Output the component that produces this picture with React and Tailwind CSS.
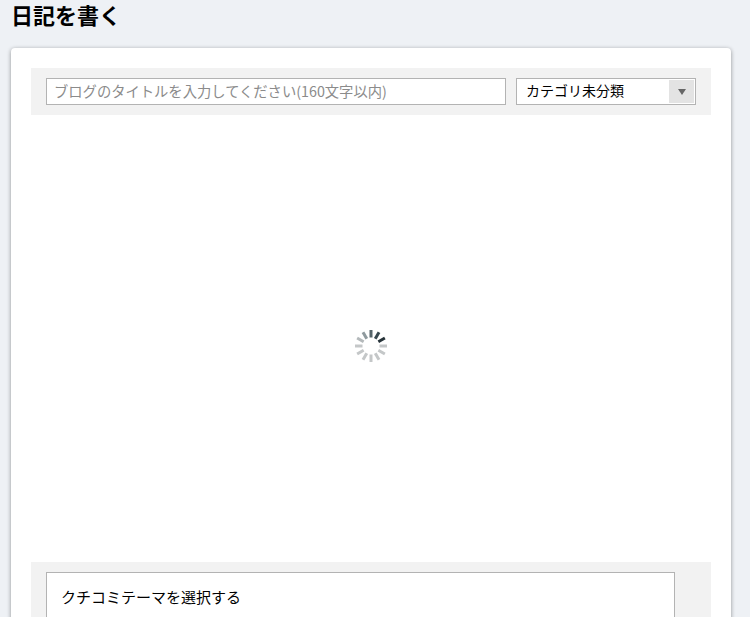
import React from 'react';

// 12 bars, clockwise from the top
const spinnerBars = [
  { angle: 0, color: '#56656b' },
  { angle: 30, color: '#37474f' },
  { angle: 60, color: '#263238' },
  { angle: 90, color: '#c4c7c8' },
  { angle: 120, color: '#c4c7c8' },
  { angle: 150, color: '#c4c7c8' },
  { angle: 180, color: '#c4c7c8' },
  { angle: 210, color: '#c4c7c8' },
  { angle: 240, color: '#c4c7c8' },
  { angle: 270, color: '#c4c7c8' },
  { angle: 300, color: '#b4b9bb' },
  { angle: 330, color: '#8f9a9e' },
];

const Spinner = () => (
  <svg width="34" height="34" viewBox="0 0 34 34" aria-label="loading">
    {spinnerBars.map((bar) => (
      <line
        key={bar.angle}
        x1="17"
        y1="1"
        x2="17"
        y2="8.5"
        stroke={bar.color}
        strokeWidth="3"
        transform={`rotate(${bar.angle} 17 17)`}
      />
    ))}
  </svg>
);

const App = () => {
  return (
    <div className="h-screen overflow-hidden bg-[#eef1f5] pl-[11px] pr-[19px] font-['Noto_Sans_CJK_JP','Liberation_Sans',sans-serif] text-black">
      <h1 className="h-[48px] pt-[3px] font-['Liberation_Sans','Noto_Sans_CJK_JP',sans-serif] text-[22px] leading-[28px] font-bold">日記を書く</h1>

      <div className="rounded-[4px] bg-white p-[20px] shadow-[0_1px_4px_rgba(0,0,0,0.4)]">
        {/* Title and category */}
        <div className="flex h-[47px] items-center gap-[10px] bg-[#f2f2f2] px-[15px]">
          <input
            type="text"
            placeholder="ブログのタイトルを入力してください(160文字以内)"
            className="h-[27px] w-[460px] border border-[#b3b3b3] bg-white px-[7px] pb-[2px] text-[14.3px] outline-none placeholder:text-[#8b8b8b]"
          />
          <div className="flex h-[27px] w-[180px] items-center justify-between border border-[#b3b3b3] bg-white pl-[9px] pr-[1px] text-[14px]">
            <span className="-mt-[2px]">カテゴリ未分類</span>
            <span className="flex h-[23px] w-[25px] items-center justify-center bg-[#e3e3e3]">
              <span className="h-0 w-0 border-x-[4px] border-t-[6px] border-x-transparent border-t-[#666666]" />
            </span>
          </div>
        </div>

        {/* Editor, still loading */}
        <div className="flex h-[447px] items-center justify-center pt-[14px]">
          <Spinner />
        </div>

        {/* Theme picker */}
        <div className="bg-[#f2f2f2] py-[10px] pl-[15px] pr-[36px]">
          <div className="flex h-[50px] items-center border border-[#b3b3b3] bg-white px-[14px] pt-[1px] text-[15px]">
            クチコミテーマを選択する
          </div>
        </div>
      </div>
    </div>
  );
};

export default App;
